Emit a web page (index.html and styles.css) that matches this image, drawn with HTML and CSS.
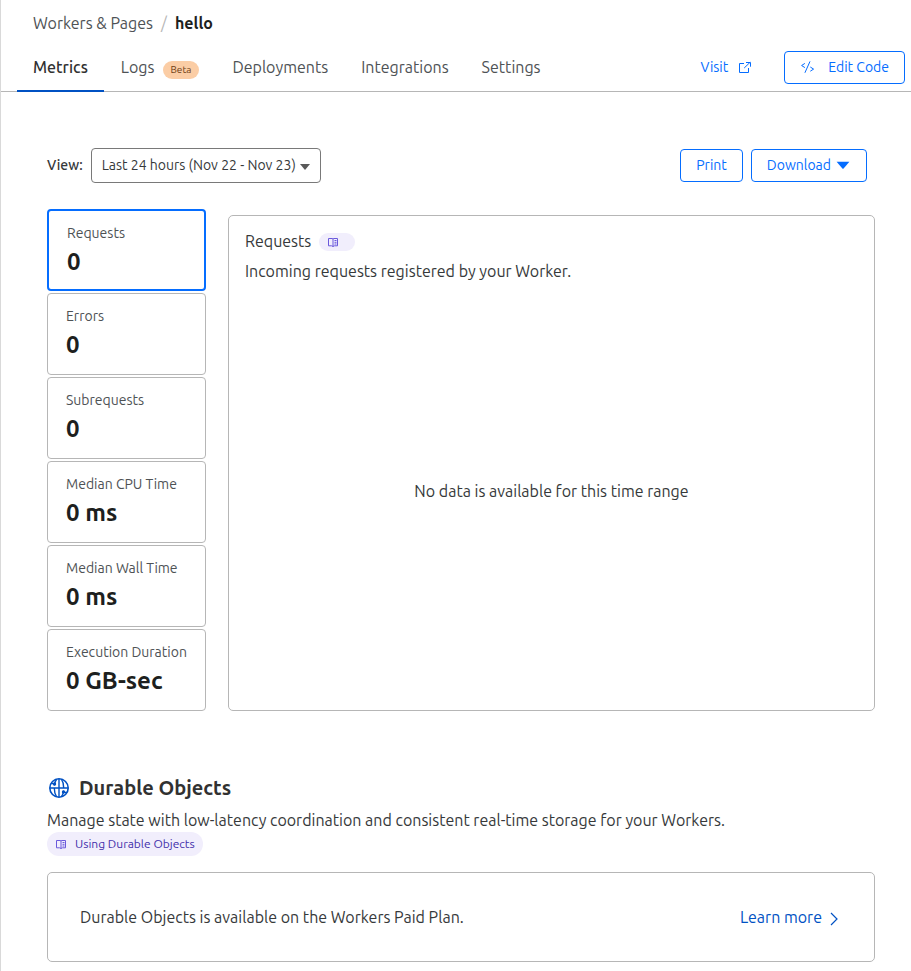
FILE: index.html
```html
<!DOCTYPE html>
<html lang="en">
<head>
    <meta charset="UTF-8">
    <meta name="viewport" content="width=device-width, initial-scale=1.0">
    <title>hello - Workers &amp; Pages</title>
    <link rel="stylesheet" href="styles.css">
</head>
<body>
    <div class="page">
        <header class="header">
            <nav class="breadcrumb" aria-label="Breadcrumb">
                <a href="#">Workers &amp; Pages</a>
                <span class="separator">/</span>
                <strong>hello</strong>
            </nav>
            <div class="header-bar">
                <nav class="tabs" aria-label="Worker">
                    <a href="#" class="tab active">Metrics</a>
                    <a href="#" class="tab">Logs <span class="badge">Beta</span></a>
                    <a href="#" class="tab">Deployments</a>
                    <a href="#" class="tab">Integrations</a>
                    <a href="#" class="tab">Settings</a>
                </nav>
                <div class="header-actions">
                    <a href="#" class="visit-link">
                        Visit
                        <svg width="13" height="13" viewBox="0 0 13 13" fill="none" stroke="currentColor" aria-hidden="true">
                            <path d="M6 2.5H1.5v9h9V7"/>
                            <path d="M8 1.5h4.5v4.2M12.2 1.2L6.2 7"/>
                        </svg>
                    </a>
                    <button type="button" class="btn edit-btn">
                        <svg width="15" height="14" viewBox="0 0 15 14" fill="none" stroke="currentColor" aria-hidden="true">
                            <path d="M4.9 3.4L1.6 5.5l3.3 2.1M10 1.4L4.9 12.8M10.3 7l3.3 2.1-3.3 2.1"/>
                        </svg>
                        Edit Code
                    </button>
                </div>
            </div>
        </header>

        <main class="content">
            <div class="toolbar">
                <label class="view-label" for="view">View:</label>
                <div class="select-wrap">
                    <select id="view">
                        <option>Last 24 hours (Nov 22 - Nov 23)</option>
                    </select>
                    <svg class="select-arrow" width="10" height="6" viewBox="0 0 10 6" fill="currentColor" aria-hidden="true"><path d="M0 0h10L5 6z"/></svg>
                </div>
                <div class="toolbar-actions">
                    <button type="button" class="btn">Print</button>
                    <button type="button" class="btn">
                        Download
                        <svg width="15" height="8" viewBox="0 0 15 8" fill="currentColor" aria-hidden="true"><path d="M0.6 0.8h12.8L7.6 7.5q-.6.5-1.2 0z"/></svg>
                    </button>
                </div>
            </div>

            <section class="metrics">
                <div class="stats">
                    <button type="button" class="stat selected"><span class="stat-name">Requests</span><span class="stat-value">0</span></button>
                    <button type="button" class="stat"><span class="stat-name">Errors</span><span class="stat-value">0</span></button>
                    <button type="button" class="stat"><span class="stat-name">Subrequests</span><span class="stat-value">0</span></button>
                    <button type="button" class="stat"><span class="stat-name">Median CPU Time</span><span class="stat-value">0 ms</span></button>
                    <button type="button" class="stat"><span class="stat-name">Median Wall Time</span><span class="stat-value">0 ms</span></button>
                    <button type="button" class="stat"><span class="stat-name">Execution Duration</span><span class="stat-value">0 GB-sec</span></button>
                </div>
                <div class="chart">
                    <div class="chart-title">
                        <h2>Requests</h2>
                        <a href="#" class="doc-pill small" aria-label="Requests documentation">
                            <svg width="12" height="11" viewBox="0 0 12 11" fill="none" stroke="currentColor" aria-hidden="true">
                                <path d="M6 1.5v8.3M1.5 1.5h3.7q.8 0 .8.6.1-.6.8-.6h3.7v7.3H7.4q-1.2 0-1.4.9-.2-.9-1.4-.9H1.5z"/>
                                <path d="M7.5 3.5h2M7.5 5.3h2M7.5 7h2"/>
                            </svg>
                        </a>
                    </div>
                    <p>Incoming requests registered by your Worker.</p>
                    <div class="chart-empty">No data is available for this time range</div>
                </div>
            </section>

            <section class="durable">
                <h2 class="durable-title">
                    <svg width="24" height="24" viewBox="0 0 24 24" fill="none" stroke="currentColor" stroke-width="1.4" aria-hidden="true">
                        <circle cx="12" cy="12" r="9.2" stroke-width="1.6"/>
                        <path d="M3 12h18M12 3v18"/>
                        <path d="M9.6 3.2C8.2 5 7.6 7 7.4 9.4M7.3 12c0 3.6.8 6.6 2.3 8.8M14.4 3.2c1.5 2.2 2.3 5.2 2.3 8.8M16.6 14.6c-.2 2.4-.8 4.4-2.2 6.2"/>
                        <path d="M4.2 7.6h2.4M17.6 16.4h2.4"/>
                        <circle cx="7.5" cy="8" r="1"/>
                        <circle cx="16.5" cy="16" r="1"/>
                    </svg>
                    Durable Objects
                </h2>
                <p>Manage state with low-latency coordination and consistent real-time storage for your Workers.</p>
                <a href="#" class="doc-pill">
                    <svg width="12" height="11" viewBox="0 0 12 11" fill="none" stroke="currentColor" aria-hidden="true">
                        <path d="M6 1.5v8.3M1.5 1.5h3.7q.8 0 .8.6.1-.6.8-.6h3.7v7.3H7.4q-1.2 0-1.4.9-.2-.9-1.4-.9H1.5z"/>
                        <path d="M7.5 3.5h2M7.5 5.3h2M7.5 7h2"/>
                    </svg>
                    <span>Using Durable Objects</span>
                </a>
                <div class="plan">
                    <span>Durable Objects is available on the Workers Paid Plan.</span>
                    <a href="#" class="learn-more">
                        Learn more
                        <svg width="8" height="14" viewBox="0 0 8 14" fill="none" stroke="currentColor" stroke-width="1.2" aria-hidden="true"><path d="M1 1l6 6-6 6"/></svg>
                    </a>
                </div>
            </section>
        </main>
    </div>
</body>
</html>
```

FILE: styles.css
```css
* {
    box-sizing: border-box;
}
body {
    margin: 0;
    background: #fff;
    color: #36393a;
    font-family: Ubuntu, "Open Sans", "Noto Sans", sans-serif;
    font-size: 16px;
    line-height: 24px;
}
a {
    color: inherit;
    text-decoration: none;
}
h2, p {
    margin: 0;
}
button, select {
    font-family: inherit;
    cursor: pointer;
}
.page {
    min-height: 100vh;
    border-left: 1px solid #d9d9d9;
}

/* header */
.header {
    padding-top: 11px;
    border-bottom: 1px solid #b6b6b6;
}
.breadcrumb {
    display: flex;
    gap: 8px;
    padding-left: 32px;
    color: #4e5255;
}
.breadcrumb strong {
    color: #1d1f20;
    font-weight: 600;
}
.separator {
    color: #b6b6b6;
}
.header-bar {
    display: flex;
    justify-content: space-between;
    padding: 8px 6px 0 16px;
}
.tabs {
    display: flex;
    gap: 1px;
    margin-bottom: -1px;
}
.tab {
    display: flex;
    align-items: center;
    gap: 8px;
    height: 49px;
    padding: 0 16px;
    border-bottom: 2px solid transparent;
    color: #4e5255;
}
.tab.active {
    border-color: #0051c3;
    color: #313131;
    font-weight: 500;
}
.badge {
    margin-top: 6px;
    padding: 0 8px;
    border-radius: 9px;
    background: #fbcda5;
    color: #6b3b13;
    font-size: 10px;
    line-height: 18px;
}
.header-actions {
    display: flex;
    align-items: center;
    gap: 33px;
    color: #056dff;
    font-size: 14px;
}
.visit-link {
    display: flex;
    align-items: center;
    gap: 10px;
}
.btn {
    display: flex;
    align-items: center;
    gap: 5px;
    height: 33px;
    padding: 0 15px;
    border: 1px solid #056dff;
    border-radius: 4px;
    background: #fff;
    color: #056dff;
    font-size: 14px;
}
.edit-btn {
    gap: 13px;
}

/* metrics */
.content {
    padding: 56px 36px 9px 46px;
}
.toolbar {
    display: flex;
    align-items: center;
    gap: 8px;
    padding-right: 8px;
    font-size: 14px;
}
.view-label {
    padding-bottom: 2px;
    font-weight: 500;
}
.select-wrap {
    position: relative;
}
.select-wrap select {
    display: block;
    width: 230px;
    height: 35px;
    padding: 0 24px 2px 10px;
    border: 1px solid #797979;
    border-radius: 4px;
    appearance: none;
    background: #fff;
    color: #36393a;
    font-size: 14px;
}
.select-arrow {
    position: absolute;
    right: 11px;
    top: 16px;
    color: #595959;
    pointer-events: none;
}
.toolbar-actions {
    display: flex;
    gap: 8px;
    margin-left: auto;
}
.toolbar-actions .btn {
    padding-bottom: 2px;
}
.metrics {
    display: grid;
    grid-template-columns: 159px 1fr;
    gap: 22px;
    margin-top: 26px;
}
.stats {
    display: flex;
    flex-direction: column;
    gap: 2px;
}
.stat {
    display: flex;
    flex-direction: column;
    height: 82px;
    padding: 10px 18px 0;
    border: 1px solid #b6b6b6;
    border-radius: 4px;
    background: #fff;
    text-align: left;
    white-space: nowrap;
}
.stat.selected {
    border: 2px solid #056dff;
}
.stat-name {
    color: #4e5255;
    font-size: 14px;
    line-height: 24px;
}
.stat-value {
    color: #1d1f20;
    font-size: 24px;
    font-weight: 600;
    line-height: 34px;
}
.chart {
    display: flex;
    flex-direction: column;
    margin-top: 6px;
    padding: 13px 16px 0;
    border: 1px solid #b6b6b6;
    border-radius: 5px;
}
.chart-title {
    display: flex;
    align-items: center;
    gap: 8px;
    margin-bottom: 6px;
}
.chart-title h2 {
    font-size: 16px;
    font-weight: 400;
}
.chart-empty {
    display: flex;
    flex: 1;
    align-items: center;
    justify-content: center;
    padding-bottom: 12px;
}
.doc-pill {
    display: inline-flex;
    align-items: center;
    gap: 8px;
    height: 24px;
    padding: 0 8px;
    border-radius: 12px;
    background: #f1eefc;
    color: #4430ab;
    font-size: 12px;
}
.doc-pill svg {
    color: #6a59dc;
}
.doc-pill.small {
    width: 36px;
    height: 18px;
    margin-top: 2px;
}

/* durable objects */
.durable {
    margin-top: 61px;
}
.durable-title {
    display: flex;
    align-items: center;
    gap: 8px;
    margin-bottom: 4px;
    color: #313131;
    font-size: 20px;
    font-weight: 600;
    line-height: 32px;
}
.durable-title svg {
    color: #0051c3;
}
.durable .doc-pill {
    display: flex;
    width: fit-content;
}
.plan {
    display: flex;
    align-items: center;
    justify-content: space-between;
    min-height: 90px;
    margin-top: 16px;
    padding: 0 36px 0 32px;
    border: 1px solid #b6b6b6;
    border-radius: 5px;
}
.learn-more {
    display: flex;
    align-items: center;
    gap: 8px;
    color: #0051c3;
}
.learn-more svg {
    margin-top: 3px;
}
```
